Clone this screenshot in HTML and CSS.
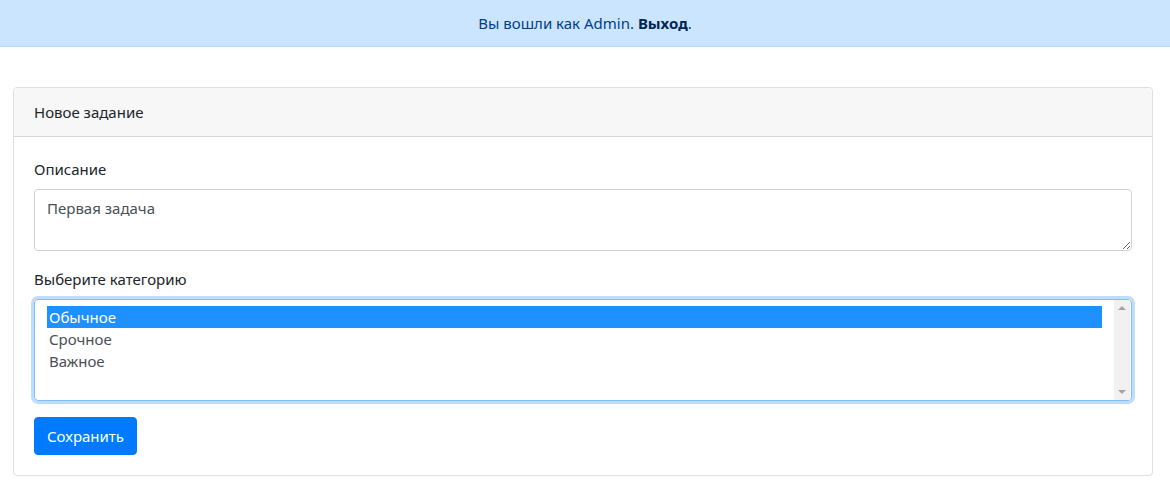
FILE: index.html
```html
<!DOCTYPE html>
<html lang="ru">
<head>
<meta charset="utf-8">
<title>Новое задание</title>
<link rel="stylesheet" href="styles.css">
</head>
<body>
<div class="alert">Вы вошли как Admin. <a href="#" class="alert-link">Выход</a>.</div>
<div class="container">
  <div class="card">
    <div class="card-header">Новое задание</div>
    <form class="card-body">
      <div class="form-group">
        <label class="label" for="desc">Описание</label>
        <textarea id="desc" class="control textarea" rows="2">Первая задача</textarea>
      </div>
      <div class="form-group">
        <label class="label">Выберите категорию</label>
        <div class="listbox" role="listbox" tabindex="0">
          <div class="options">
            <div class="option selected" role="option">Обычное</div>
            <div class="option" role="option">Срочное</div>
            <div class="option" role="option">Важное</div>
          </div>
          <div class="scrollbar">
            <span class="arrow up"></span>
            <span class="arrow down"></span>
          </div>
        </div>
      </div>
      <div class="actions">
        <button type="button" class="btn">Сохранить</button>
      </div>
    </form>
  </div>
</div>
</body>
</html>
```
FILE: styles.css
```css
* { box-sizing: border-box; }
html, body { margin: 0; }
body {
  font-family: "Noto Sans", "Open Sans", sans-serif;
  font-size: 15px;
  line-height: 24px;
  color: #212529;
  background: #fff;
}
.alert {
  background: #cce5ff;
  color: #004085;
  border-bottom: 1px solid #b8daff;
  text-align: center;
  padding: 11px 20px;
  height: 47px;
}
.alert-link {
  color: #002752;
  font-weight: 700;
  text-decoration: none;
}
.container {
  padding: 40px 0 0 13px;
}
.card {
  width: 1140px;
  border: 1px solid rgba(0,0,0,.125);
  border-radius: 4px;
}
.card-header {
  background: #f7f7f7;
  border-bottom: 1px solid rgba(0,0,0,.125);
  padding: 12px 20px;
  border-radius: 3px 3px 0 0;
}
.card-body {
  padding: 20px;
  margin: 0;
}
.form-group { margin-bottom: 16px; }
.label {
  display: block;
  margin-bottom: 8px;
}
.control {
  display: block;
  width: 100%;
  border: 1px solid #ced4da;
  border-radius: 4px;
  font: inherit;
  color: #495057;
  background: #fff;
}
.textarea {
  height: 62px;
  padding: 6px 12px;
  resize: vertical;
  line-height: 24px;
}
.listbox {
  display: flex;
  height: 102px;
  padding: 3px 2px 3px 12px;
  border: 1px solid #80bdff;
  border-radius: 4px;
  box-shadow: 0 0 0 3px rgba(0,123,255,.25);
  color: #495057;
  outline: none;
}
.options {
  flex: 1;
  padding-top: 3px;
  margin-right: 12px;
}
.option {
  height: 22px;
  line-height: 22px;
  padding-left: 2px;
}
.option.selected {
  background: #1e90ff;
  color: #fff;
}
.scrollbar {
  width: 16px;
  margin: -3px -1px -3px 0;
  background: #f1f1f1;
  display: flex;
  flex-direction: column;
  justify-content: space-between;
  align-items: center;
  padding: 6px 0;
}
.arrow {
  width: 0;
  height: 0;
  border-left: 4px solid transparent;
  border-right: 4px solid transparent;
}
.arrow.up { border-bottom: 4px solid #a3a3a3; }
.arrow.down { border-top: 4px solid #a3a3a3; }
.actions { margin: 0; }
.btn {
  font: inherit;
  color: #fff;
  background: #007bff;
  border: 1px solid #007bff;
  border-radius: 4px;
  padding: 6px 12px;
  height: 38px;
  cursor: pointer;
}
```
